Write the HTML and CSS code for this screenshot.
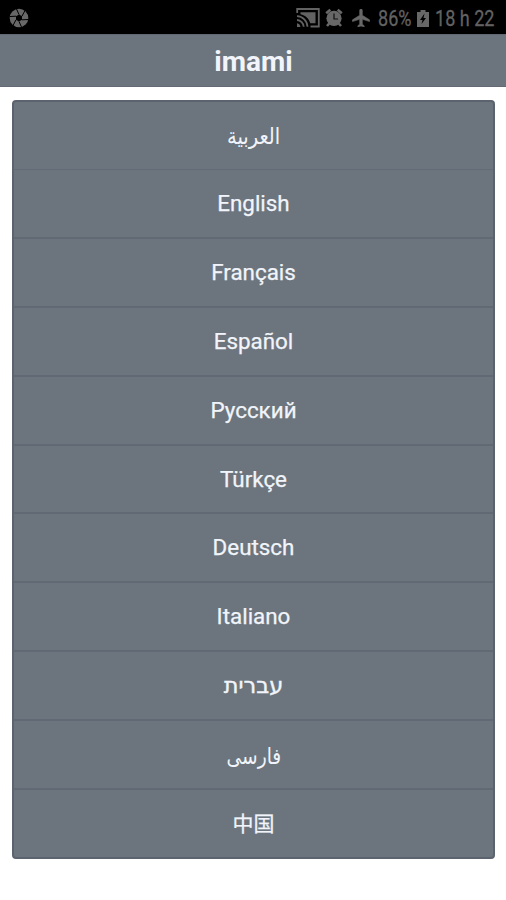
FILE: index.html
```html
<!DOCTYPE html>
<html lang="en">
<head>
<meta charset="utf-8">
<title>imami</title>
<link rel="stylesheet" href="styles.css">
</head>
<body>
<div class="status">
  <svg class="shutter" width="20" height="20" viewBox="0 0 20 20"><circle cx="10" cy="10" r="9.3" fill="#686868"/><path d="M10 6.5 13 8.2V11.8L10 13.5 7 11.8V8.2Z" fill="#000"/><path d="M10 6.5 7.5 1M13 8.2 16 2.500M13 11.8 19 11.500M10 13.500 12.500 19M7 11.800 4 17.500M7 8.2 1 8.500" stroke="#000" stroke-width="1"/></svg>
  <svg class="cast" width="24" height="20" viewBox="0 0 24 20" fill="none" stroke="#626262" stroke-width="1.8"><path d="M1.2 5V1H22.8V18.5H14.5"/><path d="M4.5 4.2H19.5V15.3H14.2C13 10.5 9.5 7.2 4.5 6.2Z" fill="#626262" stroke="none"/><path d="M1 8.2A11 11 0 0 1 11.5 18.8M1 12A7 7 0 0 1 7.7 18.8"/><path d="M1 15.3A4 4 0 0 1 4.4 19H1Z" fill="#626262" stroke="none"/></svg>
  <svg class="alarm" width="18" height="20" viewBox="0 0 18 20"><circle cx="9" cy="10.3" r="7.6" fill="#686868"/><path d="M1.2 5.2 5.3 1.8M12.7 1.8 16.8 5.2M4.2 15.5 2 18M13.8 15.5 16 18" stroke="#686868" stroke-width="2.6"/><path d="M9 5.5V11H13" fill="none" stroke="#111" stroke-width="1.2"/></svg>
  <svg class="plane" width="18" height="18" viewBox="2 2 19 20"><path fill="#686868" stroke="#686868" stroke-width=".6" d="M21 16v-2l-8-5V3.5a1.5 1.5 0 0 0-3 0V9l-8 5v2l8-2.5V19l-2 1.5V22l3.5-1 3.5 1v-1.5L13 19v-5.5z"/></svg>
  <span class="label percent"><span>86%</span></span>
  <svg class="battery" width="12" height="17" viewBox="0 0 12 17"><path fill="#686868" d="M3.5 0H8.5V2H12V17H0V2H3.5Z"/><path d="M7.5 3.5 3 10H5.5L4.5 14 9 8H6.5Z" fill="#000"/></svg>
  <span class="label time"><span>18 h 22</span></span>
</div>
<header class="bar">imami</header>
<main class="list">
  <div class="row arabic" lang="ar" dir="rtl"><span>العربية</span></div>
  <div class="row"><span>English</span></div>
  <div class="row"><span>Français</span></div>
  <div class="row"><span>Español</span></div>
  <div class="row"><span>Русский</span></div>
  <div class="row"><span>Türkçe</span></div>
  <div class="row"><span>Deutsch</span></div>
  <div class="row"><span>Italiano</span></div>
  <div class="row hebrew" lang="he" dir="rtl"><span>עברית</span></div>
  <div class="row persian" lang="fa" dir="rtl"><span>فارسی</span></div>
  <div class="row chinese" lang="zh"><span>中国</span></div>
</main>
</body>
</html>
```
FILE: styles.css
```css
* { box-sizing: border-box; }
body {
  margin: 0;
  height: 900px;
  background: #fff;
  font-family: Roboto, "Noto Sans", "DejaVu Sans", "Noto Sans CJK SC", sans-serif;
  color: #f1f4fa;
}
svg { display: block; flex: none; }
.status {
  display: flex;
  align-items: center;
  height: 34px;
  padding: 2px 11px 0 9px;
  background: #000;
  color: #626262;
}
.cast { margin-left: auto; }
.alarm { margin-left: 5px; }
.plane { margin-left: 9px; }
.label {
  flex: none;
  font-size: 22px;
  line-height: 32px;
  padding-top: 1px;
  white-space: nowrap;
  -webkit-text-stroke: .3px #626262;
}
.label span { display: block; transform-origin: 0 50%; transform: scaleX(.82); }
.percent { width: 34px; margin-left: 8px; }
.battery { margin-left: 5px; }
.time { width: 60px; margin-left: 6px; }
.bar {
  height: 53px;
  padding-left: 1px;
  border-top: 1px solid #626975;
  border-bottom: 1px solid #646b76;
  background: #6c757d;
  font-size: 28px;
  font-weight: 700;
  line-height: 53px;
  text-align: center;
}
.list {
  display: grid;
  grid-template-rows: 68px repeat(9, 68.9px) 1fr;
  height: 759px;
  margin: 13px 11px 0 12px;
  border: 2px solid #5b636e;
  border-radius: 4px;
  background: #6c757d;
}
.row {
  display: flex;
  align-items: center;
  justify-content: center;
  min-height: 0;
  padding-bottom: 1px;
  border-bottom: 2px solid #616974;
  font-size: 22.4px;
  line-height: 26px;
  -webkit-text-stroke: .25px #f1f4fa;
}
.row:first-child { border-bottom: 1px solid #636b76; }
.row:last-child { border-bottom: 0; }
.arabic span { transform: scaleX(.87); }
.arabic { padding: 0; -webkit-text-stroke-width: 0; }
.persian { padding: 2px 0 0; -webkit-text-stroke-width: 0; }
.persian span { transform: scaleX(.83); }
.hebrew { -webkit-text-stroke-width: .4px; }
.chinese { padding-bottom: 4px; font-family: "Noto Sans CJK SC", sans-serif; font-size: 21px; }
```
